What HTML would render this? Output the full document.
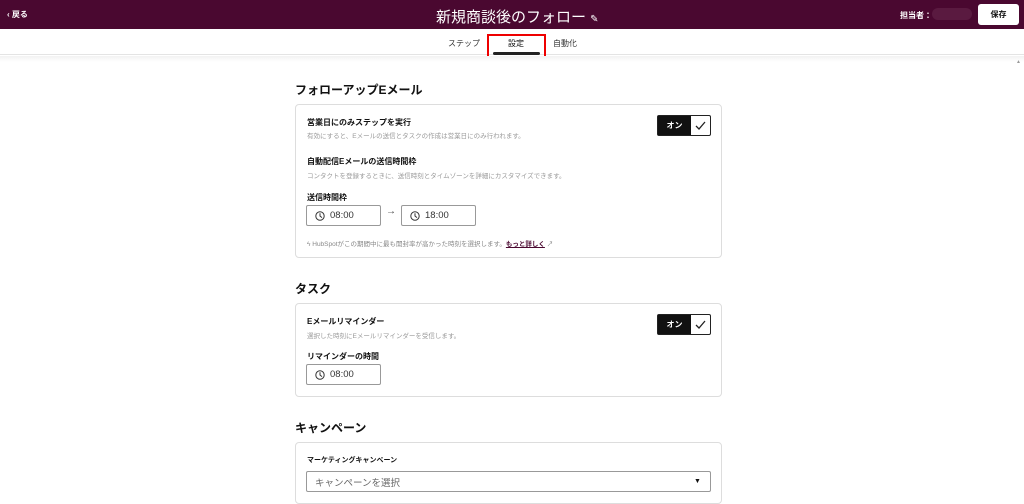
<!DOCTYPE html>
<html><head><meta charset="utf-8"><style>
*{box-sizing:border-box;margin:0;padding:0}
body{width:1024px;height:504px;overflow:hidden;background:#fff;font-family:"Liberation Sans","Noto Sans CJK JP",sans-serif;color:#111;position:relative}
.abs{position:absolute}
.hdr{left:0;top:0;width:1024px;height:29px;background:#4a0830}
.tabs{left:0;top:29px;width:1024px;height:26px;background:#fff;border-bottom:1px solid #e4e4e4}
.shade{left:0;top:56px;width:1024px;height:6px;background:linear-gradient(#f2f2f2,#fff)}
.card{border:1px solid #ddd;border-radius:4px;background:#fff}
.h2{font-size:12px;font-weight:bold;left:295px}
.lab{font-size:8px;font-weight:bold;left:307px}
.sub{font-size:6.5px;color:#999;left:307px}
.inp{border:1px solid #999;border-radius:2px;height:21px;font-size:9.5px;color:#333;display:flex;align-items:center;padding-left:8px;gap:5px}
.tog{width:54px;height:21px;border:1px solid #222;border-radius:2px;display:flex}
.tog .on{width:33px;background:#111;color:#fff;font-size:8px;font-weight:bold;display:flex;align-items:center;justify-content:center}
.tog .ck{flex:1;display:flex;align-items:center;justify-content:center}
</style></head><body>
<div class="abs hdr"></div>
<div class="abs" style="left:7px;top:9px;color:#fff;font-size:8px;font-weight:bold">‹ 戻る</div>
<div class="abs" style="left:436px;top:6px;color:#fff;font-size:15px">新規商談後のフォロー <span style="font-size:10px">✎</span></div>
<div class="abs" style="left:900px;top:10px;color:#fff;font-size:8px;font-weight:bold">担当者：</div>
<div class="abs" style="left:932px;top:8px;width:40px;height:12px;background:#5a1a40;border-radius:6px"></div>
<div class="abs" style="left:978px;top:4px;width:41px;height:21px;background:#fff;border-radius:3px;font-size:8px;font-weight:bold;display:flex;align-items:center;justify-content:center">保存</div>
<div class="abs tabs"></div>
<div class="abs" style="left:448px;top:38px;font-size:8px;color:#333">ステップ</div>
<div class="abs" style="left:508px;top:38px;font-size:8px;color:#111">設定</div>
<div class="abs" style="left:553px;top:38px;font-size:8px;color:#333">自動化</div>
<div class="abs" style="left:493px;top:52px;width:47px;height:3px;background:#222;border-radius:2px"></div>
<div class="abs" style="left:487px;top:34px;width:59px;height:28px;border:2px solid #e00"></div>
<div class="abs shade"></div>
<div class="abs" style="left:1016px;top:59px;font-size:5px;color:#999">▲</div>

<div class="abs h2" style="top:81px">フォローアップEメール</div>
<div class="abs card" style="left:295px;top:104px;width:427px;height:154px"></div>
<div class="abs lab" style="top:117px">営業日にのみステップを実行</div>
<div class="abs sub" style="top:130px">有効にすると、Eメールの送信とタスクの作成は営業日にのみ行われます。</div>
<div class="abs tog" style="left:657px;top:115px"><div class="on">オン</div><div class="ck"><svg width="11" height="9"><path d="M1 5l3 3 6-7" stroke="#222" stroke-width="1.3" fill="none"/></svg></div></div>
<div class="abs lab" style="top:156px">自動配信Eメールの送信時間枠</div>
<div class="abs sub" style="top:170px">コンタクトを登録するときに、送信時刻とタイムゾーンを詳細にカスタマイズできます。</div>
<div class="abs lab" style="top:192px">送信時間枠</div>
<div class="abs inp" style="left:306px;top:205px;width:75px"><svg width="10" height="10"><circle cx="5" cy="5" r="4.2" stroke="#333" fill="none"/><path d="M5 2.3v2.7l2 1.6" stroke="#333" fill="none"/></svg>08:00</div>
<div class="abs" style="left:386px;top:206px;font-size:10px;color:#444">→</div>
<div class="abs inp" style="left:401px;top:205px;width:75px"><svg width="10" height="10"><circle cx="5" cy="5" r="4.2" stroke="#333" fill="none"/><path d="M5 2.3v2.7l2 1.6" stroke="#333" fill="none"/></svg>18:00</div>
<div class="abs" style="left:307px;top:238px;font-size:6.5px;color:#888">ϟ HubSpotがこの期間中に最も開封率が高かった時刻を選択します。<span style="color:#4a0830;font-weight:bold;text-decoration:underline">もっと詳しく</span> ↗</div>

<div class="abs h2" style="top:280px">タスク</div>
<div class="abs card" style="left:295px;top:303px;width:427px;height:94px"></div>
<div class="abs lab" style="top:316px">Eメールリマインダー</div>
<div class="abs sub" style="top:330px">選択した時刻にEメールリマインダーを受信します。</div>
<div class="abs tog" style="left:657px;top:314px"><div class="on">オン</div><div class="ck"><svg width="11" height="9"><path d="M1 5l3 3 6-7" stroke="#222" stroke-width="1.3" fill="none"/></svg></div></div>
<div class="abs lab" style="top:351px">リマインダーの時間</div>
<div class="abs inp" style="left:306px;top:364px;width:75px"><svg width="10" height="10"><circle cx="5" cy="5" r="4.2" stroke="#333" fill="none"/><path d="M5 2.3v2.7l2 1.6" stroke="#333" fill="none"/></svg>08:00</div>

<div class="abs h2" style="top:419px">キャンペーン</div>
<div class="abs card" style="left:295px;top:442px;width:427px;height:62px"></div>
<div class="abs lab" style="top:455px;font-size:7px">マーケティングキャンペーン</div>
<div class="abs inp" style="left:306px;top:471px;width:405px;color:#666">キャンペーンを選択</div>
<div class="abs" style="left:694px;top:478px;font-size:7px">▼</div>
</body></html>
